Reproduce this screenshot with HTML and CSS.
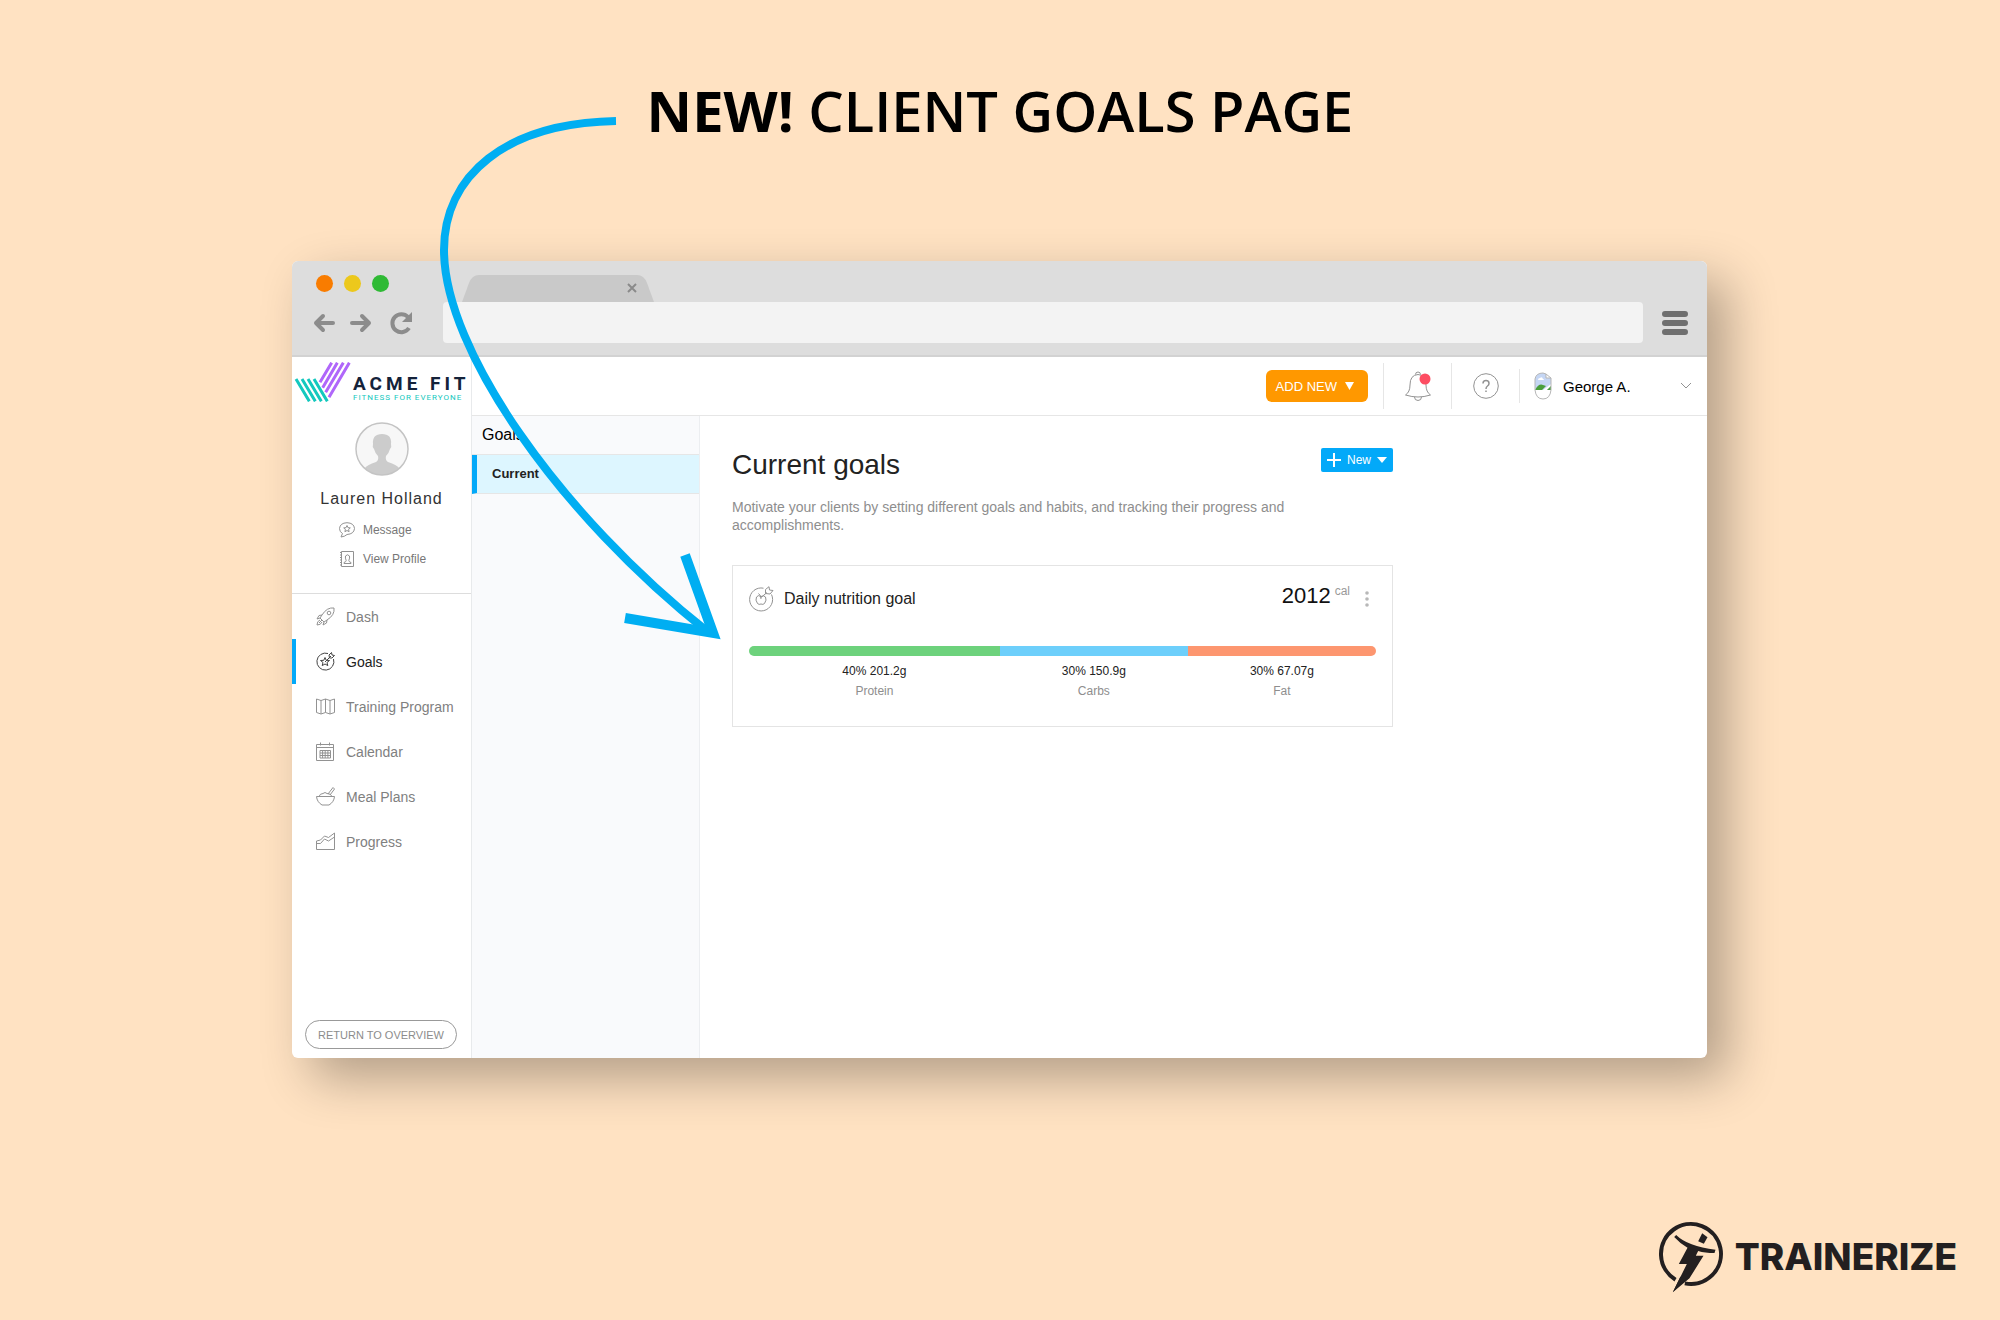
FILE: index.html
```html
<!DOCTYPE html>
<html lang="en">
<head>
	<meta charset="UTF-8">
	<title>Client Goals Page</title>
	<link rel="stylesheet" href="styles.css">
</head>
<body>
	<h1 class="headline"><strong>NEW!</strong> CLIENT GOALS PAGE</h1>

	<div class="window">
		<div class="chrome">
			<div class="tabs">
				<span class="light orange"></span>
				<span class="light yellow"></span>
				<span class="light green"></span>
				<svg class="tab" width="192" height="27" viewBox="0 0 192 27">
					<path d="M0 27L7 8Q10 0 17 0H175Q182 0 185 8L192 27Z" fill="#c9c9c9"/>
					<path d="M166 9l8 8M174 9l-8 8" stroke="#8a8a8a" stroke-width="2"/>
				</svg>
			</div>
			<div class="toolbar">
				<button class="tool" aria-label="Back">
					<svg width="22" height="20" viewBox="0 0 22 20"><path d="M20 10H3M10 3L3 10l7 7"/></svg>
				</button>
				<button class="tool" aria-label="Forward">
					<svg width="22" height="20" viewBox="0 0 22 20"><path d="M2 10H19M12 3l7 7-7 7"/></svg>
				</button>
				<button class="tool reload" aria-label="Reload">
					<svg width="24" height="24" viewBox="0 0 24 24"><path d="M19 17A9 9 0 1 1 18 6"/><path d="M22 1V11H12Z" fill="#8c8c8c" stroke="none"/></svg>
				</button>
				<input class="address" type="text" aria-label="Address">
				<button class="tool menu" aria-label="Menu">
					<svg width="26" height="26" viewBox="0 0 26 26"><path d="M3 4H23M3 13H23M3 22H23"/></svg>
				</button>
			</div>
		</div>

		<div class="app">
			<aside class="sidebar">
				<a class="logo" href="#">
					<svg width="57" height="40" viewBox="0 0 171 120" fill="none" stroke-width="9">
						<path stroke="#14c8be" d="M6 51L46 118M24 51L64 118M42 51L82 118M60 51L100 118"/>
						<path stroke="#b067fa" d="M113 2L78 61M130 2L86 77M148 2L95 91M166 2L105 106"/>
					</svg>
					<span class="brand">
						<span class="brand-name">ACME FIT</span>
						<span class="brand-tag">FITNESS FOR EVERYONE</span>
					</span>
				</a>
				<div class="client">
					<svg width="54" height="54" viewBox="0 0 54 54">
						<circle cx="27" cy="27" r="26" fill="#f7f7f7"/>
						<path d="M10 46Q12 43 21 40Q24 38 23 34Q20 31 19 27Q17 25 18 22Q17 12 27 12Q37 12 36 22Q37 25 35 27Q34 31 31 34Q30 38 33 40Q42 43 44 46Q37 53 27 53Q17 53 10 46Z" fill="#ccc"/>
						<circle cx="27" cy="27" r="26" fill="none" stroke="#c4c4c4" stroke-width="1.5"/>
					</svg>
					<h2>Lauren Holland</h2>
					<ul class="client-links">
						<li><a href="#">
							<svg class="icon" width="16" height="16" viewBox="0 0 16 16"><path d="M2 15l1.500-3.500Q.5 10 .5 6.500 1 1 8 .7 15 1 15.500 6.500 15 12 8 12.500 6 14.500 2 15Z"/><path d="M8 3.500l1 2.200 2.300.2-1.700 1.500.5 2.300L8 8.500 5.900 9.700l.5-2.300L4.700 5.900 7 5.700Z"/></svg>
							Message
						</a></li>
						<li><a href="#">
							<svg class="icon" width="16" height="16" viewBox="0 0 16 16"><path d="M2.500.5H14.500V15.500H2.500Z"/><path stroke-dasharray="1 1.500" d="M1.500 1V15"/><path d="M5 11.500q2-.5 2.200-2Q6 7 6.500 5q2-2.500 4 0 .5 2-.7 4.500.2 1.500 2.200 2v1H5Z"/></svg>
							View Profile
						</a></li>
					</ul>
				</div>
				<nav>
					<ul class="nav">
						<li><a href="#">
							<svg class="icon" width="19" height="19" viewBox="0 0 19 19"><path d="M18 1Q11 0 6 8L4 11l4 4 3-2Q19 8 18 1Z"/><circle cx="13" cy="6" r="1.800"/><path d="M6 8L3 8.500 1 12l3-1M11 13l-.5 3L7 18l1-3M4 13q-3 1-3 5 4 0 5-3M3 16l3-3"/></svg>
							Dash
						</a></li>
						<li class="active"><a href="#">
							<svg class="icon" width="19" height="19" viewBox="0 0 19 19"><path d="M12 1.500A8.500 8.500 0 1 0 17.500 7"/><path d="M9 5.500l1.200 2.800 3.300.2-2.500 2 .8 3.100L9 12l-2.800 1.600.8-3.100-2.500-2 3.300-.2Z"/><path d="M9 10l6-6M13 3l2.500-2.500.5 2.500 2.500.5L16 6h-2.500Z"/></svg>
							Goals
						</a></li>
						<li><a href="#">
							<svg class="icon" width="19" height="19" viewBox="0 0 19 19"><path d="M.5 2l4.500 1.500L9.500 2 14 3.500 18.500 2V15.500L14 17l-4.500-1.500L5 17 .5 15.500ZM5 3.500V17M9.500 2V15.500M14 3.500V17"/></svg>
							Training Program
						</a></li>
						<li><a href="#">
							<svg class="icon" width="19" height="19" viewBox="0 0 19 19"><path d="M.5 2.500H17.500V18.500H.5ZM.5 5.500H17.500M4.500.5V3.500M13.500.5V3.500M4 8.500H14.500V16H4ZM4 11H14.500M4 13.500H14.500M6.600 8.500V16M9.200 8.500V16M11.900 8.500V16"/></svg>
							Calendar
						</a></li>
						<li><a href="#">
							<svg class="icon" width="19" height="19" viewBox="0 0 19 19"><path d="M.5 9.500H18.500Q18 15 13 18H6Q1 15 .5 9.500ZM3 9.500q1-3 4-3 2-2 4 0 4 0 5 3M12 7l5-6.500L18.500 2 14 8"/></svg>
							Meal Plans
						</a></li>
						<li><a href="#">
							<svg class="icon" width="19" height="19" viewBox="0 0 19 19"><path d="M.5 9l4-1 4-4 4 1.500L18.500 1V17.500H.5ZM.5 11.500h4l4-4.500 4 2 6-4"/></svg>
							Progress
						</a></li>
					</ul>
				</nav>
				<button class="return">RETURN TO OVERVIEW</button>
			</aside>

			<header class="topbar">
				<button class="add-new">ADD NEW <svg width="9" height="8" viewBox="0 0 9 8"><path d="M0 0H9L4.500 8Z" fill="#fff"/></svg></button>
				<button class="top-icon" aria-label="Notifications">
					<svg class="icon" width="28" height="32" viewBox="0 0 28 32"><path d="M1.500 25Q6 22 6 15Q6 5 14 4.500Q22 5 22 15Q22 22 26.500 25Q20 27 14 27Q8 27 1.500 25ZM11.500 4.500A2.500 2.500 0 1 1 16.500 4.500M10.500 27A3.500 3.500 0 0 0 17.500 27"/><circle cx="21" cy="9" r="5.500" fill="#fd4d62" stroke="none"/></svg>
				</button>
				<button class="top-icon" aria-label="Help">
					<svg class="icon" width="26" height="26" viewBox="0 0 26 26"><circle cx="13" cy="13" r="12.300"/><path stroke-width="1.500" d="M10 10.500Q10 7.500 13 7.500T16 10.500Q16 12 14.500 13T13 16M13 17.500V19"/></svg>
				</button>
				<button class="user">
					<svg width="18" height="28" viewBox="0 0 18 28">
						<path d="M1 18V7Q2 1 9 1L12 2V6H17V18Z" fill="#c5d6f4"/>
						<path d="M1 18q4-7 8-5l3 1-4 4Z" fill="#4a9f3c"/>
						<path d="M9 18l8-6v2l-4 4Z" fill="#fff"/>
						<path d="M13 18l4-4v4Z" fill="#4a9f3c"/>
						<path d="M4 8q0-2 2-2 2-2 3 1 1 0 1 1Z" fill="#fff"/>
						<path d="M17 6V18Q16 27 9 27Q2 27 1 18V7Q2 1 9 1L12 2V6H17L12 2" fill="none" stroke="#b5b5b5"/>
					</svg>
					<span>George A.</span>
					<svg class="icon chevron" width="12" height="8" viewBox="0 0 12 8"><path d="M1 1l5 5 5-5"/></svg>
				</button>
			</header>

			<section class="subnav">
				<h3>Goals</h3>
				<a href="#">Current</a>
			</section>

			<main class="content">
				<div class="content-head">
					<h2>Current goals</h2>
					<button class="new-goal">
						<svg width="14" height="14" viewBox="0 0 14 14"><path d="M7 0V14M0 7H14" stroke="#fff" stroke-width="2"/></svg>
						New
						<svg width="10" height="6" viewBox="0 0 10 6"><path d="M0 0H10L5 6Z" fill="#fff"/></svg>
					</button>
				</div>
				<p class="intro">Motivate your clients by setting different goals and habits, and tracking their progress and accomplishments.</p>
				<article class="goal">
					<div class="goal-head">
						<svg class="icon" width="25" height="26" viewBox="0 0 25 26"><path d="M14.500 2.200A11.500 11.500 0 1 0 22.500 8.500"/><path d="M12 10.500Q9 8.500 7.500 11Q6 14 8.500 17.500Q10 19 12 18Q14 19 15.500 17.500Q18 14 16.500 11Q15 9 12 10.500ZM12 13Q12 9 9.500 7.500M12 11.500L18 6.500M16.500 7.500V3.500L20 .7L20.500 4L24 4.500L21 8Z"/></svg>
						<h3>Daily nutrition goal</h3>
						<span class="calories">2012</span>
						<span class="unit">cal</span>
						<button class="more" aria-label="More">
							<svg width="4" height="16" viewBox="0 0 4 16" fill="#b8b8b8"><circle cx="2" cy="2" r="1.800"/><circle cx="2" cy="8" r="1.800"/><circle cx="2" cy="14" r="1.800"/></svg>
						</button>
					</div>
					<ul class="macros">
						<li class="protein"><b>40% 201.2g</b><span>Protein</span></li>
						<li class="carbs"><b>30% 150.9g</b><span>Carbs</span></li>
						<li class="fat"><b>30% 67.07g</b><span>Fat</span></li>
					</ul>
				</article>
			</main>
		</div>
	</div>

	<footer class="footer">
		<svg width="67" height="72" viewBox="0 0 200 216">
			<path d="M52 176A90 90 0 1 1 80 187" fill="none" stroke="#231f20" stroke-width="12"/>
			<path d="M54 42Q88 76 172 86L169 96Q140 96 120 90L113 104H136L94 172L44 214L86 129H62L88 80Q64 66 48 48Z" fill="#231f20"/>
			<path d="M106 150L44 214L66 168Z" fill="#231f20"/>
			<path d="M132 37L148 49L137 68L120 61Z" fill="#231f20"/>
		</svg>
		<span>TRAINERIZE</span>
	</footer>

	<svg class="arrow" width="300" height="540" viewBox="432 110 300 540" fill="none" stroke="#00aef2">
		<path stroke-width="8" d="M616 121C505 123 444 176 444 250C444 350 560 515 708 632"/>
		<path stroke-width="10" d="M685 555L713 633L625 618"/>
	</svg>
</body>
</html>
```

FILE: styles.css
```css
*{margin:0;padding:0;box-sizing:border-box;}
li{list-style:none;}
a{color:inherit;text-decoration:none;}
button{
	font:inherit;
	color:inherit;
	background:none;
	border:0;
	cursor:pointer;
}
svg{display:block;flex:none;}
body{
	position:relative;
	display:flex;
	flex-direction:column;
	min-height:100vh;
	background:#ffe2c2;
	color:#222;
	font-family:"Liberation Sans",Arial,sans-serif;
	font-size:14px;
}
.icon{
	fill:none;
	stroke:#929292;
	stroke-width:1;
}
.headline{
	padding:71px 0 73px;
	font:600 56px/78px "Open Sans",sans-serif;
	color:#000;
	text-align:center;
}
.headline strong{font-weight:700;}
.arrow{
	position:absolute;
	left:432px;
	top:110px;
	pointer-events:none;
}

/* browser window */
.window{
	flex:1;
	display:flex;
	flex-direction:column;
	margin:39px 293px 0 292px;
	border-radius:6px;
	background:#fff;
	box-shadow:20px 20px 50px rgba(0,0,0,.3);
	overflow:hidden;
}
.chrome{
	background:#ddd;
	padding-bottom:12px;
	border-bottom:2px solid #d2d2d2;
}
.tabs{
	display:flex;
	gap:11px;
	padding:14px 24px 0;
}
.light{
	width:17px;
	height:17px;
	border-radius:50%;
}
.orange{background:#f97c00;}
.yellow{background:#ecc81c;}
.green{background:#2fba35;}
.tab{margin-left:62px;}
.toolbar{
	display:flex;
	align-items:center;
	padding:0 18px 0 20px;
}
.tool{
	padding:0 1px;
	margin-right:13px;
	fill:none;
	stroke:#8c8c8c;
	stroke-width:4;
	stroke-linecap:round;
	stroke-linejoin:round;
}
.reload{
	margin:0 28px 0 3px;
	stroke-linecap:butt;
}
.menu{
	margin:0 0 0 18px;
	stroke:#6f6f6f;
	stroke-width:6;
}
.address{
	flex:1;
	height:41px;
	padding:0 12px;
	border:0;
	border-radius:4px;
	background:#f3f3f3;
}

.app{
	flex:1;
	display:grid;
	grid-template-columns:180px 228px 1fr;
	grid-template-rows:59px 1fr;
}

/* left column */
.sidebar{
	grid-row:1 / 3;
	display:flex;
	flex-direction:column;
	border-right:1px solid #e8eaec;
}
.logo{
	display:flex;
	padding:5px 2px 0;
	gap:2px;
}
.brand{
	padding-top:12px;
	white-space:nowrap;
}
.brand-name,.brand-tag{
	display:block;
	font-family:Roboto,sans-serif;
}
.brand-name{
	font-size:19px;
	line-height:20px;
	font-weight:700;
	letter-spacing:4px;
	color:#14233a;
}
.brand-tag{
	font-size:8px;
	line-height:8px;
	letter-spacing:1px;
	color:#14c8be;
}
.client{
	display:flex;
	flex-direction:column;
	align-items:center;
	padding:20px 0;
	border-bottom:1px solid #ddd;
}
.client h2{
	margin:11px 0 4px;
	font-size:16px;
	line-height:24px;
	font-weight:400;
	letter-spacing:1px;
	color:#333;
}
.client-links{
	font-size:12px;
	color:#777;
}
.client-links a{
	display:flex;
	align-items:center;
	gap:8px;
	height:29px;
	padding-left:2px;
}
.nav a{
	display:flex;
	align-items:center;
	gap:11px;
	height:45px;
	padding-left:20px;
	border-left:4px solid transparent;
	color:#808080;
}
.nav .active a{
	border-color:#03a9f9;
	color:#222;
}
.nav .active .icon{stroke:#444;}
.return{
	margin:auto 14px 9px 13px;
	height:29px;
	border:1px solid #999;
	border-radius:15px;
	font-size:11px;
	color:#8c8c8c;
}

/* top bar */
.topbar{
	grid-column:2 / 4;
	display:flex;
	align-items:center;
	justify-content:flex-end;
	border-bottom:1px solid #e6e6e6;
}
.add-new{
	display:flex;
	align-items:center;
	gap:8px;
	height:32px;
	margin-right:15px;
	padding:0 14px 0 10px;
	border-radius:6px;
	background:#ff9800;
	font-size:13px;
	color:#fff;
}
.top-icon{
	display:flex;
	align-items:center;
	justify-content:center;
	width:68px;
	height:46px;
	border-left:1px solid #e6e6e6;
}
.user{
	display:flex;
	align-items:center;
	gap:11px;
	width:188px;
	height:34px;
	padding:0 15px 0 14px;
	border-left:1px solid #e6e6e6;
	font-size:15px;
	color:#000;
}
.chevron{margin-left:auto;}

.subnav{
	background:#f9fafc;
	border-right:1px solid #eceef1;
}
.subnav h3{
	padding-left:10px;
	font-size:16px;
	line-height:38px;
	font-weight:400;
	color:#000;
	border-bottom:1px solid #e6e6e6;
}
.subnav a{
	display:block;
	padding-left:15px;
	border-left:5px solid #03a9f9;
	border-bottom:1px solid #e6e6e6;
	background:#ddf6ff;
	font-size:13px;
	line-height:38px;
	font-weight:700;
}

/* goals */
.content{
	max-width:725px;
	padding:32px;
}
.content-head{
	display:flex;
	align-items:flex-start;
	justify-content:space-between;
}
.content-head h2{
	font-size:28px;
	line-height:34px;
	font-weight:400;
}
.new-goal{
	display:flex;
	align-items:center;
	gap:6px;
	height:24px;
	padding:0 6px;
	border-radius:2px;
	background:#03a9f9;
	font-size:12px;
	color:#fff;
}
.intro{
	max-width:600px;
	margin:16px 0 31px;
	font-size:14px;
	line-height:18px;
	color:#8e8e8e;
}
.goal{
	padding:17px 16px 25px;
	border:1px solid #e4e4e4;
}
.goal-head{
	display:flex;
	align-items:center;
	height:32px;
	margin-bottom:31px;
}
.goal-head h3{
	flex:1;
	margin-left:10px;
	font-size:16px;
	font-weight:400;
}
.calories{
	font-size:22px;
	line-height:26px;
	align-self:flex-start;
	color:#111;
}
.unit{
	align-self:flex-start;
	margin:0 15px 0 4px;
	font-size:12px;
	line-height:16px;
	color:#999;
}
.more{padding:0 7px 0 0;}
.macros{
	display:grid;
	grid-template-columns:4fr 3fr 3fr;
	font-size:12px;
	line-height:20px;
	text-align:center;
}
.macros li::before{
	content:"";
	display:block;
	height:10px;
	margin-bottom:5px;
}
.macros b,.macros span{
	display:block;
	font-weight:400;
}
.macros span{color:#8e8e8e;}
.protein::before{
	background:#6dd27c;
	border-radius:5px 0 0 5px;
}
.carbs::before{background:#6dcffb;}
.fat::before{
	background:#fd966f;
	border-radius:0 5px 5px 0;
}

.footer{
	display:flex;
	align-items:flex-start;
	justify-content:flex-end;
	gap:10px;
	padding:163px 43px 27px;
	font:800 37px/72px Inter,sans-serif;
	color:#231f20;
}
```
